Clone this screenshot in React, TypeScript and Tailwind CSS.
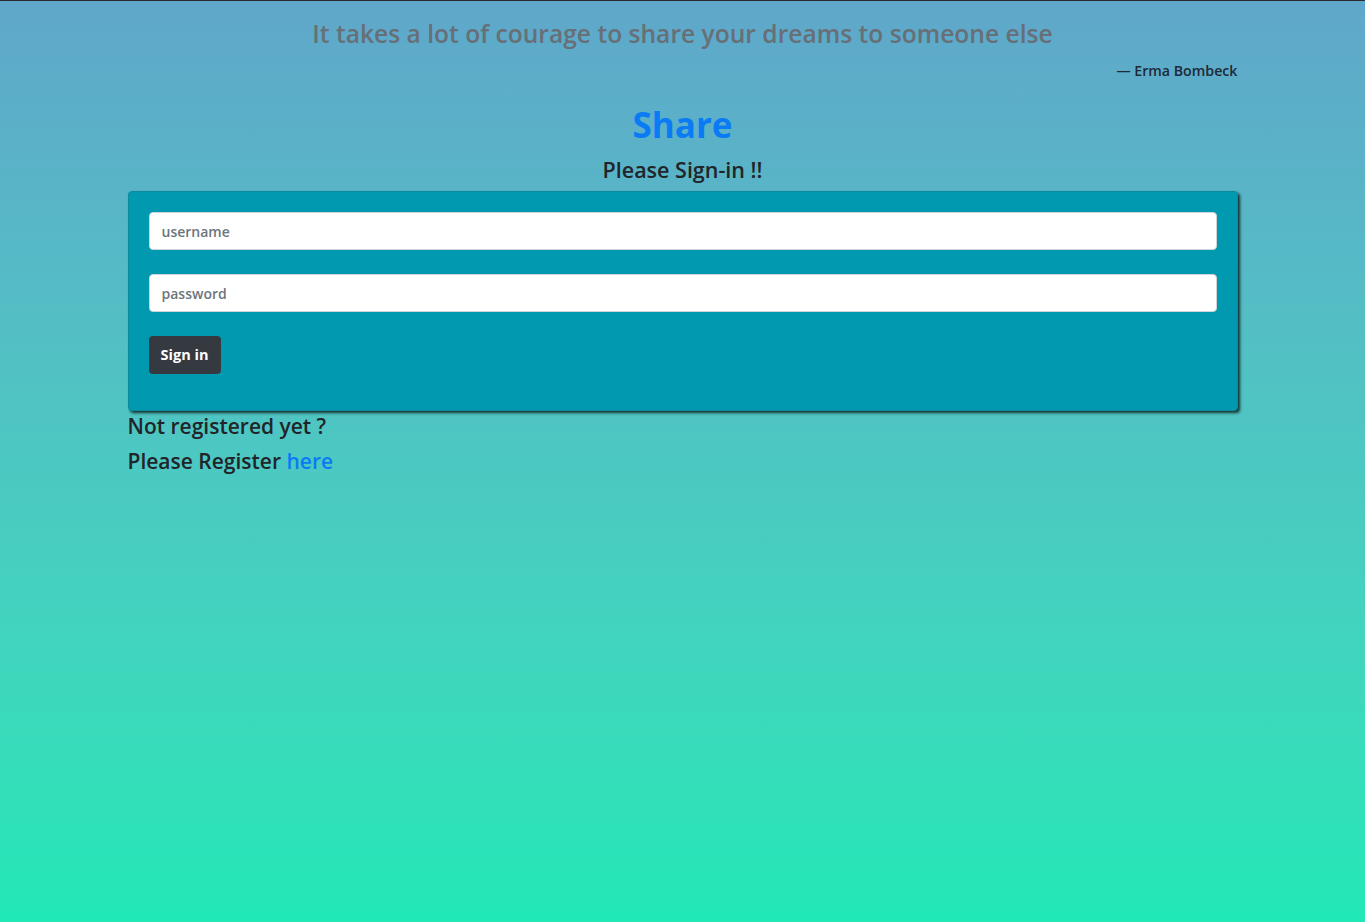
export default function App() {
  return (
    <div
      className="min-h-[922px] w-full border-t border-[#2a2a2a] bg-gradient-to-b from-[#5fa7ca] to-[#20e8b6] text-[#212529]"
      style={{ fontFamily: '"Open Sans", "Noto Sans", sans-serif' }}
    >
      <div className="mx-auto w-[1110px] pt-[15px]">
        <blockquote className="text-center">
          <p className="text-[24.6px] font-semibold leading-[36px] text-[#676f77]">
            It takes a lot of courage to share your dreams to someone else
          </p>
          <footer className="mt-[9px] text-right text-[14.2px] font-semibold leading-[20px] text-[#1f2937]">
            — Erma Bombeck
          </footer>
        </blockquote>

        <h1 className="mt-[22px] text-center text-[35px] font-bold leading-[44px] text-[#0a7bf5]">Share</h1>
        <h2 className="mt-[9px] text-center text-[21.5px] font-semibold leading-[28px]">Please Sign-in !!</h2>

        <div className="mt-[7px] rounded-[4px] border border-[#0a8a9e] bg-[#0099b0] p-[20px] pb-[36px] shadow-[2px_2px_3px_rgba(0,0,0,0.75)]">
          <form className="flex flex-col">
            <input
              type="text"
              placeholder="username"
              className="h-[38px] rounded-[4px] border border-[#ced4da] bg-white px-[12px] text-[14px] font-semibold text-[#495057] placeholder:text-[#6c757d] outline-none"
            />
            <input
              type="password"
              placeholder="password"
              className="mt-[24px] h-[38px] rounded-[4px] border border-[#ced4da] bg-white px-[12px] text-[14px] font-semibold text-[#495057] placeholder:text-[#6c757d] outline-none"
            />
            <div className="mt-[24px]">
              <button
                type="button"
                className="h-[38px] w-[72px] rounded-[4px] bg-[#343a40] text-[14.5px] font-bold text-white"
              >
                Sign in
              </button>
            </div>
          </form>
        </div>

        <p className="mt-[1px] text-[21px] font-semibold leading-[28px]">Not registered yet ?</p>
        <p className="mt-[7px] text-[21px] font-semibold leading-[28px]">
          Please Register <a className="text-[#0a7bf5]">here</a>
        </p>
      </div>
    </div>
  );
}
